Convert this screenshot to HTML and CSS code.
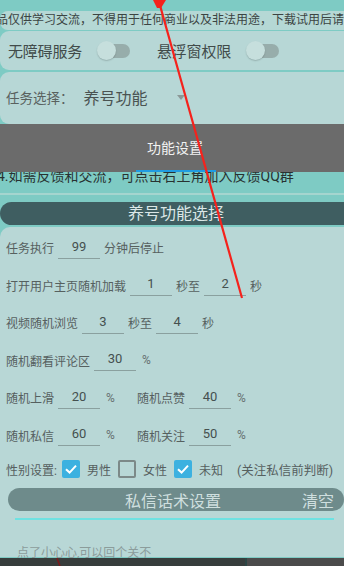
FILE: index.html
```html
<!DOCTYPE html>
<html lang="zh">
<head>
<meta charset="utf-8">
<link rel="stylesheet" href="styles.css">
</head>
<body>
<div class="screen">
  <div class="topgap"></div>
  <div class="marquee"><span>品仅供学习交流，不得用于任何商业以及非法用途，下载试用后请</span></div>
  <div class="card perms">
    <span class="perm-label">无障碍服务</span>
    <span class="switch"><span class="track"></span><span class="thumb"></span></span>
    <span class="perm-label second">悬浮窗权限</span>
    <span class="switch"><span class="track"></span><span class="thumb"></span></span>
  </div>
  <div class="card task">
    <span class="task-label">任务选择：</span>
    <span class="task-value">养号功能</span>
    <span class="caret"></span>
  </div>
  <div class="notice">
    <div class="notice-line">4.如需反馈和交流，可点击右上角加入反馈QQ群</div>
  </div>
  <div class="separator"></div>
  <div class="section-head">养号功能选择</div>
  <div class="panel">
    <div class="row">
      <span class="lbl">任务执行</span><span class="inp">99</span><span class="lbl">分钟后停止</span>
    </div>
    <div class="row">
      <span class="lbl">打开用户主页随机加载</span><span class="inp">1</span><span class="lbl">秒至</span><span class="inp">2</span><span class="lbl">秒</span>
    </div>
    <div class="row">
      <span class="lbl">视频随机浏览</span><span class="inp">3</span><span class="lbl">秒至</span><span class="inp">4</span><span class="lbl">秒</span>
    </div>
    <div class="row">
      <span class="lbl">随机翻看评论区</span><span class="inp">30</span><span class="lbl pct">%</span>
    </div>
    <div class="row">
      <span class="group"><span class="lbl">随机上滑</span><span class="inp">20</span><span class="lbl pct">%</span></span>
      <span class="group"><span class="lbl">随机点赞</span><span class="inp">40</span><span class="lbl pct">%</span></span>
    </div>
    <div class="row">
      <span class="group"><span class="lbl">随机私信</span><span class="inp">60</span><span class="lbl pct">%</span></span>
      <span class="group"><span class="lbl">随机关注</span><span class="inp">50</span><span class="lbl pct">%</span></span>
    </div>
    <div class="row gender">
      <span class="lbl">性别设置:</span>
      <span class="cb checked"><svg viewBox="0 0 18 18" width="18" height="18"><path d="M4 9.2 L7.6 12.6 L14 5.6" fill="none" stroke="#fff" stroke-width="2"/></svg></span>
      <span class="lbl cb-text">男性</span>
      <span class="cb"></span>
      <span class="lbl cb-text">女性</span>
      <span class="cb checked"><svg viewBox="0 0 18 18" width="18" height="18"><path d="M4 9.2 L7.6 12.6 L14 5.6" fill="none" stroke="#fff" stroke-width="2"/></svg></span>
      <span class="lbl cb-text">未知</span>
      <span class="lbl hint">(关注私信前判断)</span>
    </div>
    <div class="msg-head">
      <span class="msg-title">私信话术设置</span>
      <span class="msg-clear">清空</span>
    </div>
    <div class="cyan-line"></div>
    <div class="msg-text">点了小心心,可以回个关不</div>
  </div>
  <div class="bottom-bar"><span class="bb-left"></span><span class="bb-right"></span></div>

  <div class="toast">
    <span class="toast-text">功能设置</span>
    <span class="toast-bar"></span>
  </div>

  <svg class="annot" width="344" height="566" viewBox="0 0 344 566">
    <polygon points="153,0 166,0 161,8 157,8" fill="#f5221c"/>
    <line x1="158.5" y1="0" x2="242" y2="298" stroke="#f5221c" stroke-width="2.2"/>
    <line x1="57" y1="558" x2="60" y2="566" stroke="#7a1a1a" stroke-width="1.6"/>
  </svg>
</div>
</body>
</html>
```

FILE: styles.css
```css
* { box-sizing: border-box; }
html, body { margin: 0; padding: 0; }
body {
  width: 344px;
  height: 566px;
  overflow: hidden;
  background: #7ecbc4;
  font-family: "Roboto", "Noto Sans CJK SC", sans-serif;
}
.screen {
  position: relative;
  width: 344px;
  height: 566px;
  overflow: hidden;
  background: #7ecbc4;
  display: flex;
  flex-direction: column;
}
.topgap { height: 11px; flex: none; }
.marquee {
  height: 19px;
  flex: none;
  background: #b5d8d5;
  border-radius: 8px 0 0 8px;
  overflow: hidden;
  white-space: nowrap;
  font-size: 12px;
  line-height: 19px;
  color: #3b4443;
}
.marquee span { display: inline-block; margin-left: -4px; }
.card {
  flex: none;
  background: #b7d7d6;
  border-radius: 9px 0 0 9px;
  display: flex;
  align-items: center;
}
.perms { height: 39px; margin-top: 1px; padding-left: 8px; }
.perm-label { font-size: 15px; color: #414b4a; letter-spacing: -0.2px; }
.perm-label.second { margin-left: 26px; }
.switch {
  position: relative;
  width: 34px;
  height: 18px;
  margin-left: 15px;
  flex: none;
}
.switch .track {
  position: absolute;
  left: 4px; top: 2px;
  width: 29px; height: 14px;
  border-radius: 7px;
  background: #97adab;
}
.switch .thumb {
  position: absolute;
  left: 0; top: -1px;
  width: 19px; height: 19px;
  border-radius: 50%;
  background: #c6dfdd;
  box-shadow: 0 1px 1.5px rgba(0,0,0,0.18);
}
.task { height: 52px; margin-top: 2px; padding-left: 6px; padding-bottom: 2px; }
.task-label { font-size: 13.5px; color: #59615f; }
.task-value { font-size: 16px; color: #4a5352; margin-left: 10px; }
.caret {
  width: 0; height: 0;
  margin-left: 29px;
  border-left: 4.5px solid transparent;
  border-right: 4.5px solid transparent;
  border-top: 5px solid #8b9897;
}
.notice {
  height: 69px;
  flex: none;
  display: flex;
  flex-direction: column;
  justify-content: flex-end;
  overflow: hidden;
  padding-bottom: 7px;
}
.notice-line {
  height: 20px;
  line-height: 20px;
  font-size: 14px;
  color: #283231;
  white-space: nowrap;
  margin-left: -3px;
}
.separator { height: 2px; flex: none; background: #a5d5cf; }
.section-head {
  flex: none;
  height: 23px;
  margin-top: 7px;
  background: #3f5e61;
  border-radius: 12px 0 0 12px;
  color: #dbe7e7;
  font-size: 16px;
  line-height: 23px;
  text-align: center;
  padding-left: 8px;
}
.panel {
  flex: none;
  margin-top: 2px;
  height: 330px;
  background: #b8d7d6;
  border-radius: 10px 0 0 0;
  padding: 2px 0 0 6px;
  display: flex;
  flex-direction: column;
}
.row {
  height: 37.5px;
  flex: none;
  display: flex;
  align-items: center;
}
.group { display: flex; align-items: center; width: 131px; flex: none; }
.lbl { font-size: 12px; color: #56605f; white-space: nowrap; }
.inp {
  width: 42px;
  height: 22px;
  margin: 0 4px 0 4px;
  border-bottom: 1.3px solid #8aa09f;
  text-align: center;
  font-size: 13px;
  line-height: 20px;
  color: #45504f;
}
.lbl.pct { margin-left: 2px; color: #66706f; }
.gender { height: 30px; }
.cb {
  width: 18px; height: 18px;
  flex: none;
  border-radius: 2px;
  border: 2px solid #7c8988;
  margin-left: 5px;
}
.cb.checked { border: none; background: #3cb1e0; }
.cb svg { display: block; }
.cb-text { margin-left: 7px; margin-right: 2px; }
.hint { margin-left: 12px; font-size: 12.5px; }
.msg-head {
  flex: none;
  height: 23px;
  margin-top: 4px;
  margin-left: 2px;
  background: #6e8b8b;
  border-radius: 12px;
  display: flex;
  align-items: center;
}
.msg-title {
  flex: 1;
  text-align: center;
  font-size: 16px;
  color: #cfdfdf;
  padding-left: 36px;
}
.msg-clear { font-size: 16px; color: #cfdfdf; margin-right: 10px; }
.cyan-line {
  flex: none;
  height: 2px;
  margin: 7px 10px 0 9px;
  background: #6ee2e2;
}
.msg-text {
  flex: none;
  margin-top: 25px;
  margin-left: 11px;
  font-size: 12px;
  color: #8b9c9b;
  line-height: 16px;
}
.bottom-bar {
  position: absolute;
  left: 0; top: 558px;
  width: 344px; height: 8px;
  display: flex;
}
.bb-left { width: 247px; background: #373d3c; border-right: 2px solid #2c4645; }
.bb-right { flex: 1; background: #4b4b4b; }
.toast {
  position: absolute;
  left: 0; top: 124px;
  width: 344px; height: 48px;
  background: #6b6b6b;
  display: flex;
  flex-direction: column;
  justify-content: flex-end;
}
.toast-text {
  color: #f2f2f2;
  font-size: 14px;
  text-align: center;
  line-height: 20px;
  margin-bottom: 12px;
  padding-left: 6px;
}
.toast-bar {
  display: block;
  width: 80px; height: 2px;
  margin-left: 136px;
  background: #1f9ce2;
}
.annot { position: absolute; left: 0; top: 0; pointer-events: none; }
```
